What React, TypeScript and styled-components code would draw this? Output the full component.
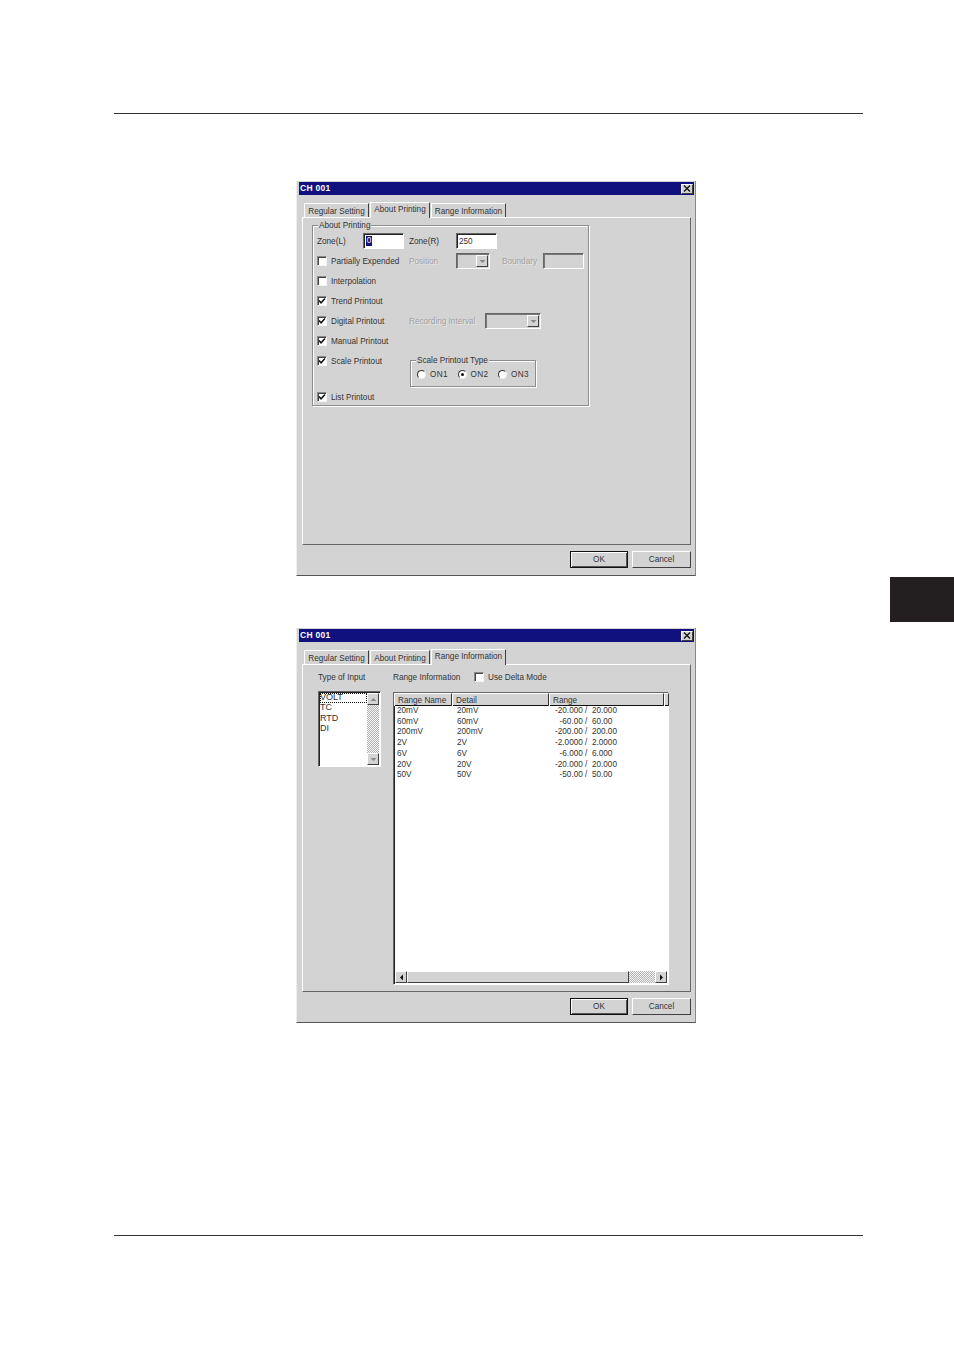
import React from "react";
import styled, { createGlobalStyle, css } from "styled-components";

const FACE = "#d3d3d3";
const INK = "#333";

const GlobalStyle = createGlobalStyle`
  html, body {
    margin: 0;
    padding: 0;
    background: #fff;
  }
  * {
    box-sizing: border-box;
  }
`;

const raised = css`
  border-top: 1px solid #fff;
  border-left: 1px solid #fff;
  border-right: 1px solid #404040;
  border-bottom: 1px solid #404040;
`;

const sunken = css`
  border-top: 1px solid #666;
  border-left: 1px solid #666;
  border-right: 1px solid #fff;
  border-bottom: 1px solid #fff;
  box-shadow: inset 1px 1px 0 #222;
`;

const dither = css`
  background-color: #fff;
  background-image: repeating-conic-gradient(#b4b4b4 0 25%, #f4f4f4 0 50%);
  background-size: 2px 2px;
`;

const Page = styled.div`
  width: 954px;
  height: 1350px;
  padding-top: 113px;
  background: #fff;
  overflow: hidden;
  font-family: "Liberation Sans", Arial, sans-serif;
  font-size: 8.2px;
  color: ${INK};
`;

const Rule = styled.div<{ $top?: number }>`
  width: 749px;
  height: 1px;
  margin-left: 114px;
  margin-top: ${(p) => p.$top || 0}px;
  background: #333;
`;

const Dialog = styled.div<{ $top?: number }>`
  width: 400px;
  height: 395px;
  margin-left: 296px;
  margin-top: ${(p) => p.$top || 0}px;
  padding: 1px 2px 0;
  background: ${FACE};
  border-bottom: 1px solid #555;
  border-left: 1px solid #eee;
  border-right: 1px solid #888;
`;

const TitleBar = styled.div`
  height: 13px;
  margin-right: -1px;
  padding: 0 1px 1px 1px;
  display: flex;
  align-items: center;
  justify-content: space-between;
  background: #10107f;
  color: #fff;
  font-weight: bold;
  font-size: 8.5px;
  letter-spacing: 0.3px;
`;

const CloseButton = styled.div`
  width: 12px;
  height: 10px;
  margin-top: 1px;
  display: flex;
  align-items: center;
  justify-content: center;
  background: ${FACE};
  ${raised}
`;

const Content = styled.div`
  padding: 0 2px 0 3px;
`;

const TabStrip = styled.div`
  height: 15px;
  margin-top: 7px;
  padding-left: 2px;
  display: flex;
  align-items: flex-end;
`;

const Tab = styled.div<{ $active?: boolean; $width: number }>`
  position: relative;
  width: ${(p) => p.$width}px;
  height: 14px;
  padding-top: 1px;
  margin-right: 1px;
  display: flex;
  align-items: center;
  justify-content: center;
  background: ${FACE};
  border-top: 1px solid #fff;
  border-left: 1px solid #fff;
  border-right: 1px solid #404040;
  white-space: nowrap;
  ${(p) =>
    p.$active &&
    css`
      z-index: 1;
      height: 16px;
      margin-bottom: -1px;
      padding-top: 0;
      padding-bottom: 3px;
    `}
`;

const Panel = styled.div<{ $pad: string }>`
  width: 389px;
  height: 328px;
  padding: ${(p) => p.$pad};
  background: ${FACE};
  ${raised}
  border-right-color: #666;
  border-bottom-color: #666;
`;

const ButtonRow = styled.div`
  margin-top: 6px;
  display: flex;
  justify-content: flex-end;
  gap: 4px;
`;

const PushButton = styled.div<{ $default?: boolean }>`
  width: ${(p) => (p.$default ? 58 : 59)}px;
  height: 17px;
  padding-bottom: 1px;
  display: flex;
  align-items: center;
  justify-content: center;
  background: ${FACE};
  ${raised}
  ${(p) =>
    p.$default &&
    css`
      border: 1px solid #111;
      box-shadow: inset 1px 1px 0 #fff, inset -1px -1px 0 #555;
    `}
`;

const GroupBox = styled.div`
  position: relative;
  width: 277px;
  height: 181px;
  padding: 5px 0 0 4px;
  border: 1px solid #8c8c8c;
  box-shadow: 1px 1px 0 #fff, inset 1px 1px 0 #fff;
`;

const Legend = styled.span`
  position: absolute;
  top: -5px;
  left: 5px;
  padding: 0 1px;
  background: ${FACE};
  white-space: nowrap;
`;

const Row = styled.div<{ $height?: number; $start?: boolean }>`
  height: ${(p) => p.$height || 20}px;
  display: flex;
  align-items: ${(p) => (p.$start ? "flex-start" : "center")};
`;

const CheckColumn = styled.div<{ $start?: boolean }>`
  flex: none;
  width: 92px;
  display: flex;
  align-items: center;
  gap: 4px;
  white-space: nowrap;
  ${(p) => p.$start && "height: 20px;"}
`;

const Label = styled.span<{ $width?: number; $left?: number; $disabled?: boolean }>`
  flex: none;
  width: ${(p) => (p.$width ? `${p.$width}px` : "auto")};
  margin-left: ${(p) => p.$left || 0}px;
  white-space: nowrap;
  color: ${(p) => (p.$disabled ? "#a2a2a2" : "inherit")};
  ${(p) => p.$disabled && "text-shadow: 1px 1px 0 #e6e6e6;"}
`;

const TextBox = styled.div<{ $disabled?: boolean }>`
  flex: none;
  width: 41px;
  height: 16px;
  padding: 0 0 0 2px;
  display: flex;
  align-items: center;
  background: ${(p) => (p.$disabled ? FACE : "#fff")};
  ${sunken}
  ${(p) => p.$disabled && "box-shadow: inset 1px 1px 0 #777;"}
`;

const Caret = styled.span`
  width: 6px;
  height: 10px;
  background: #10107f;
  color: #fff;
  line-height: 10px;
  text-align: center;
`;

const CheckBoxBox = styled.span`
  flex: none;
  width: 10px;
  height: 10px;
  display: flex;
  align-items: center;
  justify-content: center;
  background: #fff;
  border-top: 1px solid #8a8a8a;
  border-left: 1px solid #8a8a8a;
  border-right: 1px solid #f4f4f4;
  border-bottom: 1px solid #f4f4f4;
  box-shadow: inset 1px 1px 0 #444;
`;

const Combo = styled.div<{ $width: number }>`
  flex: none;
  width: ${(p) => p.$width}px;
  height: 16px;
  padding: 1px;
  display: flex;
  justify-content: flex-end;
  ${sunken}
  box-shadow: inset 1px 1px 0 #777;
`;

const ArrowButton = styled.div<{ $width?: number; $height?: number }>`
  flex: none;
  width: ${(p) => p.$width || 12}px;
  height: ${(p) => (p.$height ? `${p.$height}px` : "100%")};
  display: flex;
  align-items: center;
  justify-content: center;
  background: ${FACE};
  ${raised}
`;

const TypeGroup = styled.div`
  position: relative;
  width: 126px;
  height: 27px;
  margin: 9px 0 0 1px;
  padding: 7px 0 0 6px;
  display: flex;
  align-items: flex-start;
  border: 1px solid #8c8c8c;
  box-shadow: 1px 1px 0 #fff, inset 1px 1px 0 #fff;
`;

const RadioItem = styled.div`
  flex: none;
  width: 40.5px;
  height: 12px;
  display: flex;
  align-items: center;
  gap: 4px;
  letter-spacing: 0.3px;
`;

const RadioDot = styled.span<{ $on?: boolean }>`
  flex: none;
  width: 9px;
  height: 9px;
  display: flex;
  align-items: center;
  justify-content: center;
  border-radius: 50%;
  background: #fff;
  border-top: 1px solid #333;
  border-left: 1px solid #333;
  border-right: 1px solid #eee;
  border-bottom: 1px solid #eee;
  &::after {
    content: "";
    width: 3px;
    height: 3px;
    border-radius: 50%;
    background: ${(p) => (p.$on ? "#111" : "transparent")};
  }
`;

const HeadRow = styled.div`
  height: 14px;
  display: flex;
  align-items: center;
`;

const DataArea = styled.div`
  margin-top: 7px;
  display: flex;
  align-items: flex-start;
`;

const ListBox = styled.div`
  flex: none;
  width: 63px;
  height: 76px;
  margin-right: 12px;
  padding: 1px;
  display: flex;
  background: #fff;
  ${sunken}
`;

const ListItems = styled.div`
  flex: 1;
  font-size: 9px;
`;

const ListItem = styled.div<{ $focus?: boolean }>`
  height: 10.4px;
  line-height: 9px;
  ${(p) => p.$focus && "outline: 1px dotted #111; outline-offset: -1px;"}
`;

const VScroll = styled.div`
  flex: none;
  width: 12px;
  display: flex;
  flex-direction: column;
  justify-content: space-between;
  ${dither}
`;

const ListView = styled.div`
  flex: none;
  width: 276px;
  height: 293px;
  margin-top: 1px;
  padding-bottom: 1px;
  display: flex;
  flex-direction: column;
  background: #fff;
  ${sunken}
`;

const HeaderRow = styled.div`
  flex: none;
  height: 13px;
  display: grid;
  grid-template-columns: 58px 97px 115px 1fr;
  background: ${FACE};
  border-bottom: 1px solid #111;
`;

const HeaderCell = styled.div`
  padding: 1px 0 0 3px;
  white-space: nowrap;
  line-height: 11px;
  border-top: 1px solid #fff;
  border-left: 1px solid #fff;
  border-right: 1px solid #333;
`;

const DataRows = styled.div`
  flex: 1;
`;

const DataRow = styled.div`
  height: 10.72px;
  display: grid;
  grid-template-columns: 60px 96px 72px;
  line-height: 10.72px;
  white-space: pre;
`;

const DataCell = styled.div<{ $center?: boolean }>`
  padding-left: ${(p) => (p.$center ? 0 : 3)}px;
  text-align: ${(p) => (p.$center ? "center" : "left")};
`;

const HScroll = styled.div`
  flex: none;
  height: 12px;
  margin: 0 1px;
  display: flex;
  background: ${FACE};
`;

const HThumb = styled.div`
  width: 222px;
  background: ${FACE};
  ${raised}
`;

const HTrack = styled.div`
  flex: 1;
  ${dither}
`;

const SideTab = styled.div`
  width: 64px;
  height: 45px;
  margin: 1px 0 0 auto;
  background: #231f20;
`;

const Gap = styled.div`
  height: 52px;
  overflow: hidden;
`;

type Dir = "up" | "down" | "left" | "right";

const ARROWS: Record<Dir, string> = {
  up: "0.5,5 3.5,2 6.5,5",
  down: "0.5,2 3.5,5 6.5,2",
  left: "5,0.5 2,3.5 5,6.5",
  right: "2,0.5 5,3.5 2,6.5",
};

const Arrow = ({ dir, color = "#111" }: { dir: Dir; color?: string }) => (
  <svg width="7" height="7" viewBox="0 0 7 7">
    <polygon points={ARROWS[dir]} fill={color} />
  </svg>
);

const CheckBox = ({ checked }: { checked?: boolean }) => (
  <CheckBoxBox>
    {checked && (
      <svg width="8" height="8" viewBox="0 0 8 8">
        <path d="M1 3.6 L3 5.8 L7 1.4" fill="none" stroke="#111" strokeWidth="1.5" />
      </svg>
    )}
  </CheckBoxBox>
);

const Titlebar = () => (
  <TitleBar>
    CH 001
    <CloseButton>
      <svg width="8" height="7" viewBox="0 0 8 7">
        <path d="M1 0.5 L7 6.5 M7 0.5 L1 6.5" stroke="#111" strokeWidth="1.3" />
      </svg>
    </CloseButton>
  </TitleBar>
);

const Tabs = ({ active }: { active: number }) => (
  <TabStrip>
    <Tab $width={65} $active={active === 0}>Regular Setting</Tab>
    <Tab $width={60} $active={active === 1}>About Printing</Tab>
    <Tab $width={75} $active={active === 2}>Range Information</Tab>
  </TabStrip>
);

const Buttons = () => (
  <ButtonRow>
    <PushButton $default>OK</PushButton>
    <PushButton>Cancel</PushButton>
  </ButtonRow>
);

const CheckRow = ({ label, checked }: { label: string; checked?: boolean }) => (
  <CheckColumn>
    <CheckBox checked={checked} />
    {label}
  </CheckColumn>
);

const PrintingPanel = () => (
  <Panel $pad="7px 0 0 9px">
    <GroupBox>
      <Legend>About Printing</Legend>
      <Row>
        <Label $width={46}>Zone(L)</Label>
        <TextBox>
          <Caret>0</Caret>
        </TextBox>
        <Label $width={47} $left={5}>Zone(R)</Label>
        <TextBox>250</TextBox>
      </Row>
      <Row>
        <CheckRow label="Partially Expended" />
        <Label $width={47} $disabled>Position</Label>
        <Combo $width={34}>
          <ArrowButton>
            <Arrow dir="down" color="#888" />
          </ArrowButton>
        </Combo>
        <Label $width={41} $left={12} $disabled>Boundary</Label>
        <TextBox $disabled />
      </Row>
      <Row>
        <CheckRow label="Interpolation" />
      </Row>
      <Row>
        <CheckRow label="Trend Printout" checked />
      </Row>
      <Row>
        <CheckRow label="Digital Printout" checked />
        <Label $width={76} $disabled>Recording Interval</Label>
        <Combo $width={56}>
          <ArrowButton>
            <Arrow dir="down" color="#888" />
          </ArrowButton>
        </Combo>
      </Row>
      <Row>
        <CheckRow label="Manual Printout" checked />
      </Row>
      <Row $height={36} $start>
        <CheckColumn $start>
          <CheckBox checked />
          Scale Printout
        </CheckColumn>
        <TypeGroup>
          <Legend>Scale Printout Type</Legend>
          {["ON1", "ON2", "ON3"].map((name) => (
            <RadioItem key={name}>
              <RadioDot $on={name === "ON2"} />
              {name}
            </RadioItem>
          ))}
        </TypeGroup>
      </Row>
      <Row>
        <CheckRow label="List Printout" checked />
      </Row>
    </GroupBox>
  </Panel>
);

const RANGES = [
  ["20mV", "-20.000 /  20.000"],
  ["60mV", "-60.00 /  60.00"],
  ["200mV", "-200.00 /  200.00"],
  ["2V", "-2.0000 /  2.0000"],
  ["6V", "-6.000 /  6.000"],
  ["20V", "-20.000 /  20.000"],
  ["50V", "-50.00 /  50.00"],
];

const RangePanel = () => (
  <Panel $pad="5px 0 0 15px">
    <HeadRow>
      <Label $width={75}>Type of Input</Label>
      <Label $width={81}>Range Information</Label>
      <CheckBox />
      <Label $left={4}>Use Delta Mode</Label>
    </HeadRow>
    <DataArea>
      <ListBox>
        <ListItems>
          <ListItem $focus>VOLT</ListItem>
          <ListItem>TC</ListItem>
          <ListItem>RTD</ListItem>
          <ListItem>DI</ListItem>
        </ListItems>
        <VScroll>
          <ArrowButton $height={12}>
            <Arrow dir="up" color="#888" />
          </ArrowButton>
          <ArrowButton $height={12}>
            <Arrow dir="down" color="#888" />
          </ArrowButton>
        </VScroll>
      </ListBox>
      <ListView>
        <HeaderRow>
          <HeaderCell>Range Name</HeaderCell>
          <HeaderCell>Detail</HeaderCell>
          <HeaderCell>Range</HeaderCell>
          <HeaderCell />
        </HeaderRow>
        <DataRows>
          {RANGES.map(([name, range]) => (
            <DataRow key={name}>
              <DataCell>{name}</DataCell>
              <DataCell>{name}</DataCell>
              <DataCell $center>{range}</DataCell>
            </DataRow>
          ))}
        </DataRows>
        <HScroll>
          <ArrowButton $width={12}>
            <Arrow dir="left" />
          </ArrowButton>
          <HThumb />
          <HTrack />
          <ArrowButton $width={12}>
            <Arrow dir="right" />
          </ArrowButton>
        </HScroll>
      </ListView>
    </DataArea>
  </Panel>
);

export default function App() {
  return (
    <Page>
      <GlobalStyle />
      <Rule />
      <Dialog $top={67}>
        <Titlebar />
        <Content>
          <Tabs active={1} />
          <PrintingPanel />
          <Buttons />
        </Content>
      </Dialog>
      <Gap>
        <SideTab />
      </Gap>
      <Dialog>
        <Titlebar />
        <Content>
          <Tabs active={2} />
          <RangePanel />
          <Buttons />
        </Content>
      </Dialog>
      <Rule $top={212} />
    </Page>
  );
}
